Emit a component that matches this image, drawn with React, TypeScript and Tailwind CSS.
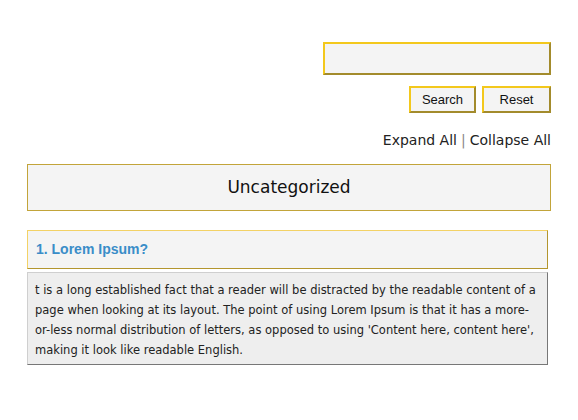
import React from "react";

export default function App() {
  return (
    <div className="w-[578px] h-[420px] bg-white px-[27px] pt-[42px]" style={{ fontFamily: '"DejaVu Sans", sans-serif' }}>
      <div className="flex flex-col items-end">
        <input
          type="text"
          className="w-[228px] h-[33px] bg-[#f4f4f4] border-2 border-t-[#f3c81c] border-l-[#f3c81c] border-b-[#a38b2c] border-r-[#a38b2c] outline-none"
        />
        <div className="flex gap-[6px] mt-[11px]" style={{ fontFamily: '"Liberation Sans", Arial, sans-serif' }}>
          <button className="w-[67px] h-[27px] bg-[#f4f4f4] text-[13px] text-[#111] border-2 border-t-[#f3c81c] border-l-[#f3c81c] border-b-[#a38b2c] border-r-[#a38b2c]">
            Search
          </button>
          <button className="w-[69px] h-[27px] bg-[#f4f4f4] text-[13px] text-[#111] border-2 border-t-[#f3c81c] border-l-[#f3c81c] border-b-[#a38b2c] border-r-[#a38b2c]">
            Reset
          </button>
        </div>
        <div className="mt-[17px] text-[14px] leading-[20px] text-[#222]">
          <span>Expand All</span>
          <span className="text-[#888] mx-[4px]">|</span>
          <span>Collapse All</span>
        </div>
      </div>
      <div className="mt-[14px] h-[47px] bg-[#f4f4f4] border border-[#c2a43a] flex items-center justify-center text-[17px] text-[#111]">
        Uncategorized
      </div>
      <div className="mr-[3px] mt-[19px]">
        <div className="h-[39px] bg-[#f4f4f4] border border-t-[#f3d266] border-l-[#f3d266] border-b-[#b3962e] border-r-[#b3962e] flex items-center pl-[8px]">
          <span className="text-[14px] font-bold text-[#3a8dc8]" style={{ fontFamily: '"Liberation Sans", Arial, sans-serif' }}>
            1. Lorem Ipsum?
          </span>
        </div>
        <div className="mt-[3px] bg-[#eeeeee] border border-t-[#cfcfcf] border-l-[#cfcfcf] border-b-[#777] border-r-[#777] pl-[7px] pr-[6px] pt-[7px] pb-[4px] text-[11.5px] leading-[20px] text-[#222]">
          t is a long established fact that a reader will be distracted by the readable content of a page when looking at its layout. The point of using Lorem Ipsum is that it has a more-or-less normal distribution of letters, as opposed to using 'Content here, content here', making it look like readable English.
        </div>
      </div>
    </div>
  );
}
